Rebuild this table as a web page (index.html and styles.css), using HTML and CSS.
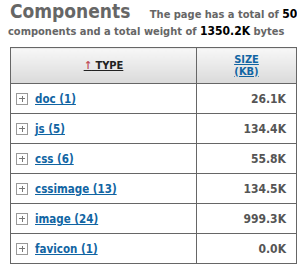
FILE: index.html
```html
<!DOCTYPE html>
<html>
<head>
<meta charset="utf-8">
<link rel="stylesheet" href="styles.css">
</head>
<body>
<div class="summary"><span class="title">Components</span> <span class="desc">The page has a total of <b>50</b> components and a total weight of <b>1350.2K</b> bytes</span></div>
<table class="comps">
  <colgroup>
    <col class="c-type">
    <col class="c-size">
    <col class="c-extra">
  </colgroup>
  <thead>
    <tr>
      <th><a href="#" class="sorted"><span class="arrow">↑</span> TYPE</a></th>
      <th><a href="#">SIZE<br>(KB)</a></th>
      <th></th>
    </tr>
  </thead>
  <tbody>
    <tr><td class="type"><span class="plus"></span><a href="#">doc (1)</a></td><td class="size">26.1K</td><td></td></tr>
    <tr><td class="type"><span class="plus"></span><a href="#">js (5)</a></td><td class="size">134.4K</td><td></td></tr>
    <tr><td class="type"><span class="plus"></span><a href="#">css (6)</a></td><td class="size">55.8K</td><td></td></tr>
    <tr><td class="type"><span class="plus"></span><a href="#">cssimage (13)</a></td><td class="size">134.5K</td><td></td></tr>
    <tr><td class="type"><span class="plus"></span><a href="#">image (24)</a></td><td class="size">999.3K</td><td></td></tr>
    <tr><td class="type"><span class="plus"></span><a href="#">favicon (1)</a></td><td class="size">0.0K</td><td></td></tr>
  </tbody>
</table>
</body>
</html>
```
FILE: styles.css
```css
html, body {
  overflow: hidden;
}
body {
  margin: 0 8px;
  background: #fff;
  font-family: "DejaVu Sans Condensed", "DejaVu Sans", sans-serif;
  font-weight: bold;
  color: #666;
}
.summary {
  font-size: 11px;
  line-height: 16px;
  width: 300px;
  padding-top: 2px;
}
.title {
  font-size: 19px;
  line-height: 18px;
  color: #666;
  margin-left: 2px;
  margin-right: 16px;
}
.desc b {
  color: #000;
  font-size: 12px;
}
.comps {
  border-collapse: collapse;
  margin-top: 7px;
  margin-left: 2px;
  table-layout: fixed;
  width: 387px;
}
.c-type { width: 186px; }
.c-size { width: 100px; }
.c-extra { width: 101px; }
.comps th, .comps td {
  border: 1px solid #666;
  padding: 0;
}
.comps thead th {
  height: 35px;
  background: linear-gradient(#f7f7f7, #dadada);
  font-size: 11px;
  text-align: center;
  line-height: 12px;
}
.comps a {
  color: #1165a3;
  text-decoration: underline;
}
.comps thead a.sorted {
  color: #222;
}
.arrow {
  color: #c0505a;
}
.comps tbody td {
  height: 29px;
  font-size: 12px;
}
.type a {
  vertical-align: middle;
  font-size: 11.5px;
}
.plus {
  display: inline-block;
  vertical-align: middle;
  width: 10px;
  height: 10px;
  border: 1px solid #999;
  position: relative;
  margin-right: 7px;
  margin-left: 5px;
}
.plus::before, .plus::after {
  content: "";
  position: absolute;
  background: #777;
}
.plus::before { left: 2px; right: 2px; top: 4.5px; height: 1px; }
.plus::after { top: 2px; bottom: 2px; left: 4.5px; width: 1px; }
.size {
  text-align: right;
  padding-right: 10px !important;
  color: #555;
}
```
